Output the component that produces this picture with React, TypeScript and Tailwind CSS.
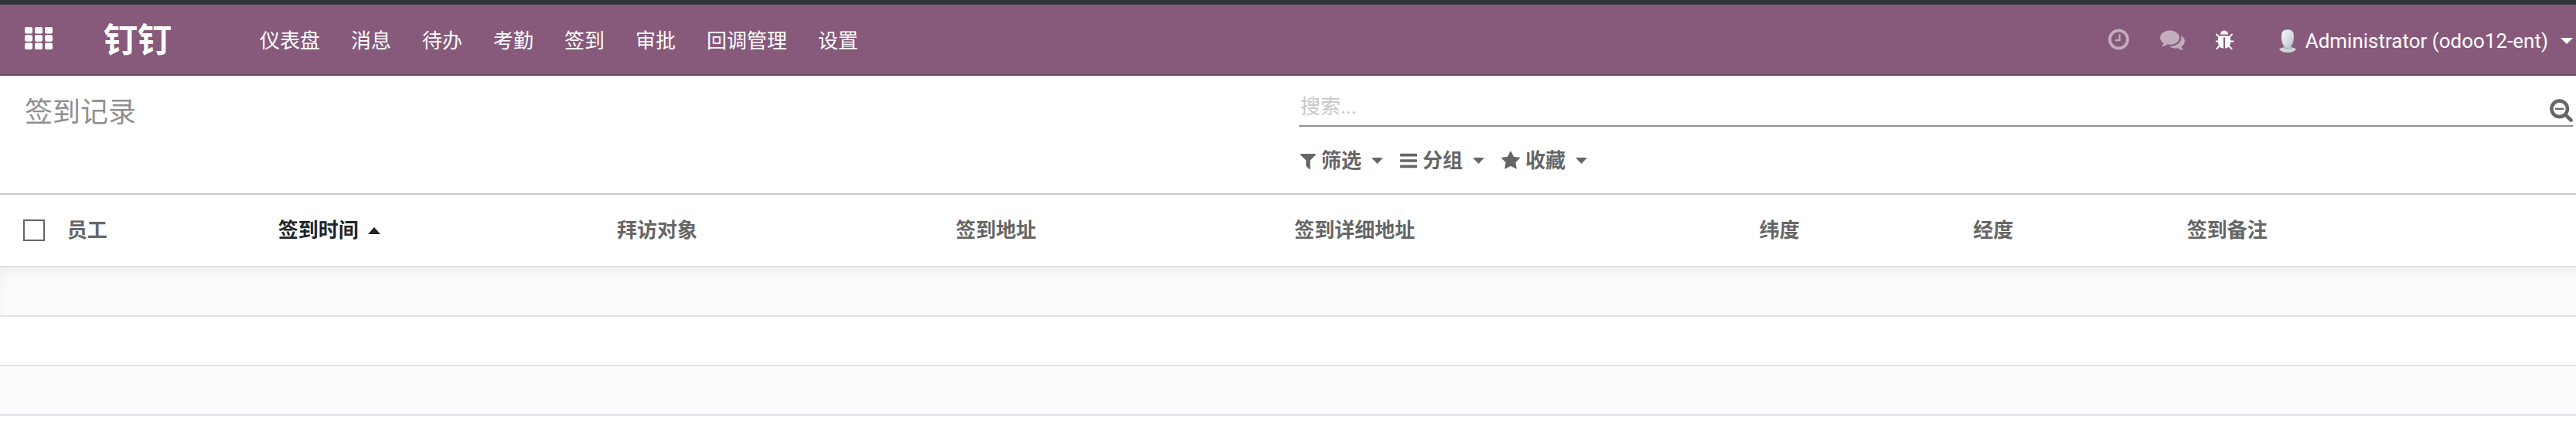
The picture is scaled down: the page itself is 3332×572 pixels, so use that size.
import React from "react";

type GlyphProps = { d: string; viewBox: string; className: string };

function Glyph({ d, viewBox, className }: GlyphProps) {
  return (
    <svg viewBox={viewBox} className={`shrink-0 fill-current ${className}`} aria-hidden="true">
      <path d={d} />
    </svg>
  );
}

const CLOCK =
  "M1024 544v448q0 14-9 23t-23 9h-320q-14 0-23-9t-9-23v-64q0-14 9-23t23-9h224v-352q0-14 9-23t23-9h64q14 0 23 9t9 23zm416 352q0-148-73-273t-198-198-273-73-273 73-198 198-73 273 73 273 198 198 273 73 273-73 198-198 73-273zm224 0q0 209-103 385.5t-279.5 279.5-385.5 103-385.5-103-279.5-279.5-103-385.5 103-385.5 279.5-279.5 385.5-103 385.5 103 279.5 279.5 103 385.5z";
const COMMENTS =
  "M1408 768q0 139-94 257t-256.5 186.5-353.5 68.5q-86 0-176-16-124 88-278 128-36 9-86 16h-3q-11 0-20.5-8t-11.5-21q-1-3-1-6.5t.5-6.5 2-6l2.5-5 3.5-5.5 4-5 4.5-5 4-4.5q5-6 23-25t26-29.5 22.5-29 25-38.5 20.5-44q-124-72-195-177t-71-224q0-139 94-257t256.5-186.5 353.5-68.5 353.5 68.5 256.5 186.5 94 257zm384 256q0 120-71 224.5t-195 176.5q10 24 20.5 44t25 38.5 22.5 29 26 29.5 23 25q1 1 4 4.5t4.5 5 4 5 3.5 5.5l2.5 5 2 6 .5 6.5-1 6.5q-3 14-13 22t-22 7q-50-7-86-16-154-40-278-128-90 16-176 16-271 0-472-132 58 4 88 4 161 0 309-45t264-129q125-92 192-212t67-254q0-77-23-152 129 71 204 178t75 230z";
const BUG =
  "M1632 1056q0 26-19 45t-45 19h-224q0 171-67 290l208 209q19 19 19 45t-19 45q-18 19-45 19t-45-19l-198-197q-5 5-15 13t-42 28.5-65 36.5-82 29-97 13v-896h-128v896q-51 0-101.5-13.5t-87-33-66-39-43.5-32.5l-15-14-183 207q-20 21-48 21-24 0-43-16-19-18-20.5-44.5t15.5-46.5l202-227q-58-114-58-274h-224q-26 0-45-19t-19-45 19-45 45-19h224v-294l-173-173q-19-19-19-45t19-45 45-19 45 19l173 173h844l173-173q19-19 45-19t45 19 19 45-19 45l-173 173v294h224q26 0 45 19t19 45zm-480-576h-640q0-133 93.5-226.5t226.5-93.5 226.5 93.5 93.5 226.5z";
const FILTER =
  "M1595 295q17 41-14 70l-493 493v742q0 42-39 59-13 5-25 5-27 0-45-19l-256-256q-19-19-19-45v-486l-493-493q-31-29-14-70 17-39 59-39h1280q42 0 59 39z";
const BARS =
  "M1664 1344v128q0 26-19 45t-45 19h-1408q-26 0-45-19t-19-45v-128q0-26 19-45t45-19h1408q26 0 45 19t19 45zm0-512v128q0 26-19 45t-45 19h-1408q-26 0-45-19t-19-45v-128q0-26 19-45t45-19h1408q26 0 45 19t19 45zm0-512v128q0 26-19 45t-45 19h-1408q-26 0-45-19t-19-45v-128q0-26 19-45t45-19h1408q26 0 45 19t19 45z";
const STAR =
  "M1728 647q0 22-26 48l-363 354 86 500q1 7 1 20 0 21-10.5 35.5t-30.5 14.5q-19 0-40-12l-449-236-449 236q-22 12-40 12-21 0-31.5-14.5t-10.5-35.5q0-6 2-20l86-500-364-354q-25-27-25-48 0-37 56-46l502-73 225-455q19-41 49-41t49 41l225 455 502 73q56 9 56 46z";
const SEARCH_MINUS =
  "M1088 800v64q0 13-9.5 22.5t-22.5 9.5h-576q-13 0-22.5-9.5t-9.5-22.5v-64q0-13 9.5-22.5t22.5-9.5h576q13 0 22.5 9.5t9.5 22.5zm128 32q0-185-131.5-316.5t-316.5-131.5-316.5 131.5-131.5 316.5 131.5 316.5 316.5 131.5 316.5-131.5 131.5-316.5zm512 832q0 53-37.5 90.5t-90.5 37.5q-54 0-90-38l-343-342q-179 124-399 124-143 0-273.5-55.5t-225-150-150-225-55.5-273.5 55.5-273.5 150-225 225-150 273.5-55.5 273.5 55.5 225 150 150 225 55.5 273.5q0 220-124 399l343 343q37 37 37 90z";

function AppsIcon() {
  const cells = [0, 1, 2];
  return (
    <svg viewBox="0 0 36 29" className="h-[29px] w-9 fill-current" aria-hidden="true">
      {cells.map((row) =>
        cells.map((col) => (
          <rect key={`${row}${col}`} x={col * 13} y={row * 10.3} width="10" height="8.4" rx="2" />
        )),
      )}
    </svg>
  );
}

function Avatar() {
  return (
    <svg viewBox="0 0 22 30" className="h-[30px] w-[22px]" aria-hidden="true">
      <defs>
        <linearGradient id="head" x1="0" y1="0" x2="1" y2="1">
          <stop offset="0" stopColor="#f4f6f7" />
          <stop offset="0.5" stopColor="#d9dfe3" />
          <stop offset="1" stopColor="#b3bec6" />
        </linearGradient>
      </defs>
      <path d="M0 25.500Q2 24 6 23H16Q20 24 22 25.500Q19 30 11 30T0 25.500Z" fill="#cdd5da" />
      <path d="M5 24Q11 26.500 17 24L15 21H7Z" fill="#a4b0b9" />
      <path d="M11 0.500C16 0.500 19 2 19 9C19 17 16.500 24 11 24C5.500 24 3 17 3 9C3 2 6 0.500 11 0.500Z" fill="url(#head)" />
    </svg>
  );
}

function Caret({ className }: { className: string }) {
  return (
    <svg viewBox="0 0 16 8" preserveAspectRatio="none" className={`shrink-0 fill-current ${className}`} aria-hidden="true">
      <path d="M0 0H16L8 8Z" />
    </svg>
  );
}

const menu = ["仪表盘", "消息", "待办", "考勤", "签到", "审批", "回调管理", "设置"];

const filters = [
  { label: "筛选", d: FILTER, viewBox: "192 0 1408 1792", size: "h-[26px] w-5" },
  { label: "分组", d: BARS, viewBox: "128 0 1536 1792", size: "h-[26px] w-[22px]" },
  { label: "收藏", d: STAR, viewBox: "64 0 1664 1792", size: "h-[26px] w-6" },
];

const columns = [
  { label: "员工", width: "w-[8.2%]" },
  { label: "签到时间", width: "w-[13.15%]", sorted: true },
  { label: "拜访对象", width: "w-[13.15%]" },
  { label: "签到地址", width: "w-[13.15%]" },
  { label: "签到详细地址", width: "w-[18.05%]" },
  { label: "纬度", width: "w-[8.3%]" },
  { label: "经度", width: "w-[8.3%]" },
  { label: "签到备注", width: "w-auto" },
];

export default function App() {
  return (
    <div className="min-h-screen bg-white font-['Roboto','Noto_Sans_CJK_SC',sans-serif] text-[26px] leading-9 text-[#666666]">
      <header className="flex h-[98px] items-center border-t-6 border-b-2 border-t-[#313539] border-b-[#68465f] bg-[#875a7b] pr-1 pl-8 text-white">
        <button type="button" aria-label="应用" className="mb-1">
          <AppsIcon />
        </button>
        <a href="#home" className="mt-1 ml-[66px] text-[44px] leading-none font-bold">
          钉钉
        </a>
        <nav className="mt-1 ml-[114px] flex gap-10">
          {menu.map((item) => (
            <a key={item} href="#menu" className="whitespace-nowrap">
              {item}
            </a>
          ))}
        </nav>
        <div className="ml-auto flex items-center">
          <button type="button" aria-label="活动" className="mr-10 text-[#c3adbd]">
            <Glyph d={CLOCK} viewBox="128 0 1536 1792" className="h-8 w-[27px]" />
          </button>
          <button type="button" aria-label="对话" className="mr-10 text-[#c3adbd]">
            <Glyph d={COMMENTS} viewBox="0 0 1792 1792" className="size-8" />
          </button>
          <button type="button" aria-label="调试" className="mr-[58px]">
            <Glyph d={BUG} viewBox="128 0 1536 1792" className="h-7 w-6" />
          </button>
          <button type="button" className="mt-1 flex items-center">
            <Avatar />
            <span className="ml-3 whitespace-nowrap">Administrator (odoo12-ent)</span>
            <Caret className="ml-4 h-2 w-4" />
          </button>
        </div>
      </header>

      <section className="flex h-[154px] border-b-2 border-[#cccccc] pr-1 pl-8">
        <h1 className="flex-1 pt-7 text-[36px] leading-10 text-[#8f8f8f]">签到记录</h1>
        <div className="w-1/2 max-w-[1648px] flex-none">
          <div className="flex h-[66px] items-end border-b-2 border-[#8f8f8f]">
            <input
              type="text"
              aria-label="搜索"
              placeholder="搜索..."
              className="mb-1.5 h-9 min-w-0 flex-1 pl-0.5 outline-none placeholder:text-[#c8c8c8]"
            />
            <button type="button" aria-label="高级搜索" className="mb-1">
              <Glyph d={SEARCH_MINUS} viewBox="64 0 1664 1792" className="h-8 w-[30px]" />
            </button>
          </div>
          <div className="mt-[26px] flex gap-[22px] pl-0.5">
            {filters.map((f) => (
              <button key={f.label} type="button" className="flex items-center font-bold">
                <Glyph d={f.d} viewBox={f.viewBox} className={f.size} />
                <span className="ml-[7px]">{f.label}</span>
                <Caret className="ml-[13px] h-2 w-[15px]" />
              </button>
            ))}
          </div>
        </div>
      </section>

      <table className="w-full table-fixed border-collapse">
        <thead>
          <tr className="h-[93px] border-b-2 border-[#dee2e6]">
            <th className="w-[2.6%] pl-[30px]">
              <input
                type="checkbox"
                aria-label="全选"
                className="block size-7 appearance-none border-2 border-[#666666] bg-white checked:bg-[#666666]"
              />
            </th>
            {columns.map((c) => (
              <th key={c.label} className={`text-left font-bold whitespace-nowrap ${c.width} ${c.sorted ? "text-[#212529]" : ""}`}>
                <span className="flex items-center">
                  {c.label}
                  {c.sorted && <Caret className="ml-3 h-[9px] w-4 rotate-180" />}
                </span>
              </th>
            ))}
          </tr>
        </thead>
        <tbody>
          <tr className="h-16 border-b-2 border-[#dee2e6] bg-[#fcfcfc] shadow-[inset_6px_12px_20px_-10px_rgba(0,0,0,0.09)]">
            <td colSpan={9} />
          </tr>
          <tr className="h-16 border-b-2 border-[#dee2e6]">
            <td colSpan={9} />
          </tr>
          <tr className="h-16 border-b-2 border-[#dee2e6] bg-[#fcfcfc]">
            <td colSpan={9} />
          </tr>
        </tbody>
      </table>
    </div>
  );
}
